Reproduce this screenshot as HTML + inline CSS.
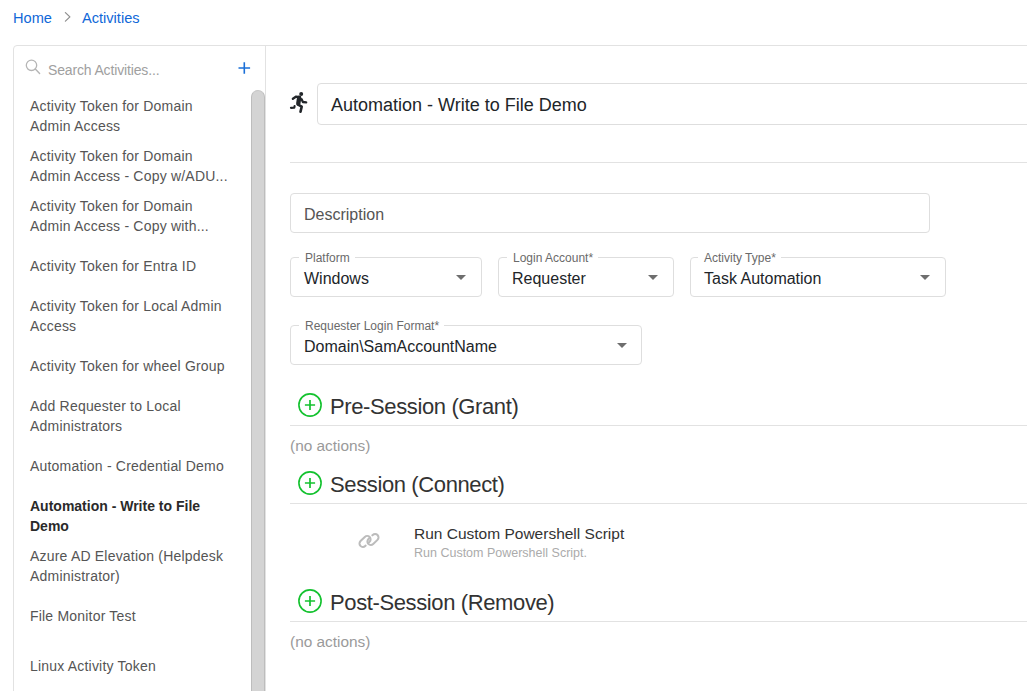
<!DOCTYPE html>
<html>
<head>
<meta charset="utf-8">
<style>
html,body{margin:0;padding:0;background:#fff;}
body{width:1027px;height:691px;overflow:hidden;position:relative;font-family:"Liberation Sans",sans-serif;color:#212529;}
.a{position:absolute;white-space:nowrap;}
.crumb{font-size:14.6px;line-height:20px;color:#1068d8;}
.panel{position:absolute;left:13px;top:45px;width:1100px;height:700px;border:1px solid #e2e2e2;border-radius:4px 0 0 0;box-sizing:border-box;}
.sidesep{position:absolute;left:265px;top:45px;width:1px;height:660px;background:#e2e2e2;}
.list{position:absolute;left:30px;top:91px;width:220px;}
.item{height:50px;display:flex;align-items:center;font-size:14px;line-height:20px;color:#555;letter-spacing:0.2px;white-space:nowrap;}
.item.sel{font-weight:bold;color:#2a2a2a;letter-spacing:0;}
.thumb{position:absolute;left:251px;top:90px;width:14px;height:640px;background:#d4d4d4;border-radius:7px 7px 0 0;box-sizing:border-box;border-left:1px solid #bdbdbd;border-right:1px solid #bdbdbd;border-top:1px solid #c8c8c8;}
.box{position:absolute;border:1px solid #dedede;border-radius:4px;box-sizing:border-box;background:#fff;}
.legend{position:absolute;background:#fff;font-size:12px;line-height:14px;color:#6a6a6a;padding:0 5px 0 6px;}
.val{position:absolute;font-size:16px;line-height:20px;color:#212529;white-space:nowrap;}
.arrow{position:absolute;width:0;height:0;border-left:5px solid transparent;border-right:5px solid transparent;border-top:5px solid #6e6e6e;}
.hr{position:absolute;left:290px;width:800px;height:1px;background:#e2e2e2;}
.h{position:absolute;font-size:22px;line-height:26px;color:#333;letter-spacing:-0.38px;white-space:nowrap;}
.noact{position:absolute;left:290px;font-size:15.4px;line-height:20px;color:#9a9a9a;white-space:nowrap;}
</style>
</head>
<body>
<!-- breadcrumb -->
<div class="a crumb" style="left:13px;top:8px;">Home</div>
<svg class="a" style="left:63px;top:11px;" width="10" height="12" viewBox="0 0 10 12"><path d="M2.4 1.6 L6.9 5.9 L2.4 10.1" fill="none" stroke="#8e8e8e" stroke-width="1.25" stroke-linecap="round" stroke-linejoin="round"/></svg>
<div class="a crumb" style="left:82px;top:8px;">Activities</div>

<div class="panel"></div>
<div class="sidesep"></div>

<!-- search -->
<svg class="a" style="left:24px;top:58px;" width="20" height="20" viewBox="0 0 20 20"><circle cx="7.5" cy="7.3" r="5.2" fill="none" stroke="#b5b5b5" stroke-width="1.3"/><path d="M11.3 11.1 L15.6 15.6" stroke="#b5b5b5" stroke-width="1.4" stroke-linecap="round"/></svg>
<div class="a" style="left:48px;top:60px;font-size:14px;line-height:20px;color:#a0a0a0;letter-spacing:-0.15px;">Search Activities...</div>
<svg class="a" style="left:236px;top:60px;" width="16" height="16" viewBox="0 0 16 16"><path d="M8.3 2.2 V13.8 M2.5 8 H14.1" stroke="#1a6fd8" stroke-width="1.6"/></svg>

<div class="list">
<div class="item">Activity Token for Domain<br>Admin Access</div>
<div class="item">Activity Token for Domain<br>Admin Access - Copy w/ADU...</div>
<div class="item">Activity Token for Domain<br>Admin Access - Copy with...</div>
<div class="item">Activity Token for Entra ID</div>
<div class="item">Activity Token for Local Admin<br>Access</div>
<div class="item">Activity Token for wheel Group</div>
<div class="item">Add Requester to Local<br>Administrators</div>
<div class="item">Automation - Credential Demo</div>
<div class="item sel">Automation - Write to File<br>Demo</div>
<div class="item">Azure AD Elevation (Helpdesk<br>Administrator)</div>
<div class="item">File Monitor Test</div>
<div class="item">Linux Activity Token</div>
</div>
<div class="thumb"></div>

<!-- main -->
<svg class="a" style="left:286px;top:88px;" width="26" height="28" viewBox="0 0 26 28">
<circle cx="15.2" cy="5.9" r="2" fill="#22262a"/>
<path d="M6.9 10.8 L10.2 8.6 L13.4 9.1" fill="none" stroke="#22262a" stroke-width="2.4" stroke-linecap="round" stroke-linejoin="round"/>
<path d="M13.2 9.7 L12.3 15.5" fill="none" stroke="#22262a" stroke-width="4.4" stroke-linecap="round"/>
<path d="M15.6 11.2 L16.9 14 L20.2 14.4" fill="none" stroke="#22262a" stroke-width="2.3" stroke-linecap="round" stroke-linejoin="round"/>
<path d="M12.1 16.6 L15.7 18.6 L14.5 23.8" fill="none" stroke="#22262a" stroke-width="2.6" stroke-linecap="round" stroke-linejoin="round"/>
<path d="M5 19.8 L8.3 19.6 L8.6 18.1" fill="none" stroke="#22262a" stroke-width="2.2" stroke-linecap="round" stroke-linejoin="round"/>
</svg>
<div class="box" style="left:317px;top:83px;width:760px;height:42px;"></div>
<div class="val" style="left:331px;top:94px;font-size:18px;line-height:22px;">Automation - Write to File Demo</div>

<div class="hr" style="top:162px;width:760px;"></div>

<div class="box" style="left:290px;top:193px;width:640px;height:40px;"></div>
<div class="val" style="left:304px;top:205px;color:#555;">Description</div>

<!-- selects row -->
<div class="box" style="left:290px;top:257px;width:192px;height:40px;"></div>
<div class="legend" style="left:299px;top:251px;">Platform</div>
<div class="val" style="left:304px;top:269px;">Windows</div>
<div class="arrow" style="left:456px;top:275px;"></div>

<div class="box" style="left:498px;top:257px;width:176px;height:40px;"></div>
<div class="legend" style="left:507px;top:251px;">Login Account*</div>
<div class="val" style="left:512px;top:269px;">Requester</div>
<div class="arrow" style="left:648px;top:275px;"></div>

<div class="box" style="left:690px;top:257px;width:256px;height:40px;"></div>
<div class="legend" style="left:698px;top:251px;">Activity Type*</div>
<div class="val" style="left:704px;top:269px;">Task Automation</div>
<div class="arrow" style="left:920px;top:275px;"></div>

<div class="box" style="left:290px;top:325px;width:352px;height:40px;"></div>
<div class="legend" style="left:299px;top:319px;">Requester Login Format*</div>
<div class="val" style="left:304px;top:337px;">Domain\SamAccountName</div>
<div class="arrow" style="left:617px;top:343px;"></div>

<!-- sections -->
<svg class="a" style="left:296px;top:391px;" width="28" height="28" viewBox="0 0 28 28"><circle cx="14" cy="14" r="11.1" fill="none" stroke="#14c22f" stroke-width="1.6"/><path d="M14 8.9 V19.1 M8.9 14 H19.1" stroke="#14c22f" stroke-width="1.7"/></svg>
<div class="h" style="left:330px;top:394px;">Pre-Session (Grant)</div>
<div class="hr" style="top:425px;"></div>
<div class="noact" style="top:436px;">(no actions)</div>

<svg class="a" style="left:296px;top:469px;" width="28" height="28" viewBox="0 0 28 28"><circle cx="14" cy="14" r="11.1" fill="none" stroke="#14c22f" stroke-width="1.6"/><path d="M14 8.9 V19.1 M8.9 14 H19.1" stroke="#14c22f" stroke-width="1.7"/></svg>
<div class="h" style="left:330px;top:472px;">Session (Connect)</div>
<div class="hr" style="top:503px;"></div>

<svg class="a" style="left:350px;top:525px;" width="40" height="30" viewBox="350 525 40 30">
<g fill="none" stroke="#bcbcbc" stroke-width="1.85" stroke-linecap="round" transform="translate(369 540.8) scale(1.1) translate(-369 -540.8)">
<path transform="translate(365.4 541.4) rotate(-44)" d="M -2.2 3.1 H -2.7 A 3.1 3.1 0 0 1 -2.7 -3.1 H 2.7 A 3.1 3.1 0 0 1 2.7 3.1 H 0.9"/>
<path transform="translate(372.6 539.6) rotate(-44)" d="M 2.2 -3.1 H 2.7 A 3.1 3.1 0 0 1 2.7 3.1 H -2.7 A 3.1 3.1 0 0 1 -2.7 -3.1 H -0.9"/>
</g>
</svg>
<div class="a" style="left:414px;top:524px;font-size:15.5px;line-height:20px;color:#333;">Run Custom Powershell Script</div>
<div class="a" style="left:414px;top:545px;font-size:12.5px;line-height:16px;color:#ababab;">Run Custom Powershell Script.</div>

<svg class="a" style="left:296px;top:587px;" width="28" height="28" viewBox="0 0 28 28"><circle cx="14" cy="14" r="11.1" fill="none" stroke="#14c22f" stroke-width="1.6"/><path d="M14 8.9 V19.1 M8.9 14 H19.1" stroke="#14c22f" stroke-width="1.7"/></svg>
<div class="h" style="left:330px;top:590px;">Post-Session (Remove)</div>
<div class="hr" style="top:621px;"></div>
<div class="noact" style="top:632px;">(no actions)</div>
</body>
</html>
